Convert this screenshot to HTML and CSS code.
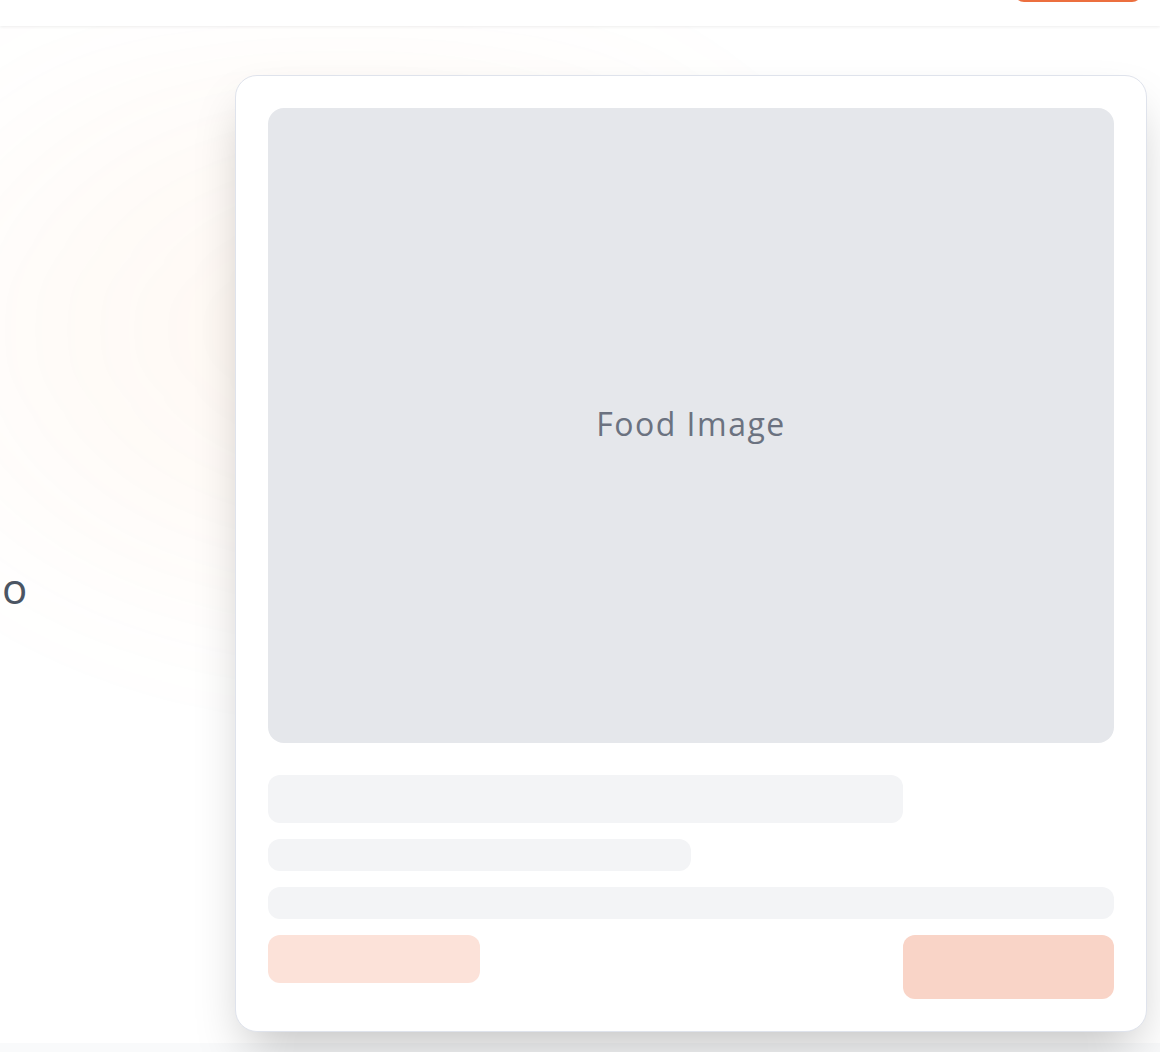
FILE: index.html
```html
<!DOCTYPE html>
<html lang="en">
<head>
<meta charset="utf-8">
<title>Food</title>
<link rel="stylesheet" href="styles.css">
</head>
<body>
<header class="topbar">
  <a class="cta" href="#" aria-label="Order now"></a>
</header>
<main class="hero">
  <div class="glow"></div>
  <div class="hero-text">
    <p class="lead">o</p>
  </div>
  <div class="card">
    <div class="image"><span>Food Image</span></div>
    <div class="sk sk-title"></div>
    <div class="sk sk-sub"></div>
    <div class="sk sk-line"></div>
    <div class="actions">
      <div class="btn btn-light"></div>
      <div class="btn btn-main"></div>
    </div>
  </div>
</main>
<section class="next"></section>
</body>
</html>
```

FILE: styles.css
```css
* { box-sizing: border-box; }
html, body { margin: 0; padding: 0; }
body {
  font-family: "Open Sans", "Noto Sans", sans-serif;
  background: #ffffff;
  overflow: hidden;
}
.topbar {
  height: 26px;
  background: #ffffff;
  display: flex;
  justify-content: flex-end;
  align-items: flex-start;
  padding-right: 18px;
  box-shadow: 0 1px 3px rgba(0, 0, 0, 0.07);
  position: relative;
  z-index: 2;
}
.cta {
  display: block;
  width: 128px;
  height: 40px;
  margin-top: -38px;
  background: #ec6f3f;
  border-radius: 10px;
}
.hero {
  position: relative;
  display: flex;
  align-items: flex-start;
  padding: 49px 13px 11px 0;
}
.glow {
  position: absolute;
  left: -150px;
  top: 0;
  width: 1100px;
  height: 760px;
  background: radial-gradient(ellipse 50% 50% at 45% 40%, rgba(251, 146, 60, 0.07), rgba(251, 146, 60, 0.03) 60%, rgba(251, 146, 60, 0) 100%);
  filter: blur(40px);
  pointer-events: none;
}
.hero-text {
  position: relative;
  width: 235px;
  flex: none;
  padding-top: 488px;
}
.lead {
  margin: 0;
  padding-left: 2px;
  font-size: 42px;
  line-height: 50px;
  font-weight: 500;
  color: #4b5563;
}
.card {
  position: relative;
  width: 912px;
  flex: none;
  background: #ffffff;
  border: 1px solid #dfe3ec;
  border-radius: 22px;
  padding: 32px;
  box-shadow: 0 25px 50px -12px rgba(0, 0, 0, 0.25);
  display: flex;
  flex-direction: column;
}
.image {
  width: 100%;
  aspect-ratio: 4 / 3;
  background: #e5e7eb;
  border-radius: 16px;
  display: flex;
  align-items: center;
  justify-content: center;
  margin-bottom: 32px;
}
.image span {
  font-family: "Open Sans", sans-serif;
  font-size: 32px;
  color: #6b7280;
  letter-spacing: 1.5px;
  margin-top: -4px;
}
.sk {
  background: #f3f4f6;
  border-radius: 12px;
  margin-bottom: 16px;
}
.sk-title { width: 75%; height: 48px; }
.sk-sub { width: 50%; height: 32px; }
.sk-line { width: 100%; height: 32px; }
.actions {
  display: flex;
  justify-content: space-between;
  align-items: flex-start;
}
.btn {
  width: 25%;
  border-radius: 12px;
}
.btn-light { height: 48px; background: #fce2d9; }
.btn-main { height: 64px; background: #f9d4c7; }
.next {
  height: 40px;
  background: #f9fafb;
}
```
